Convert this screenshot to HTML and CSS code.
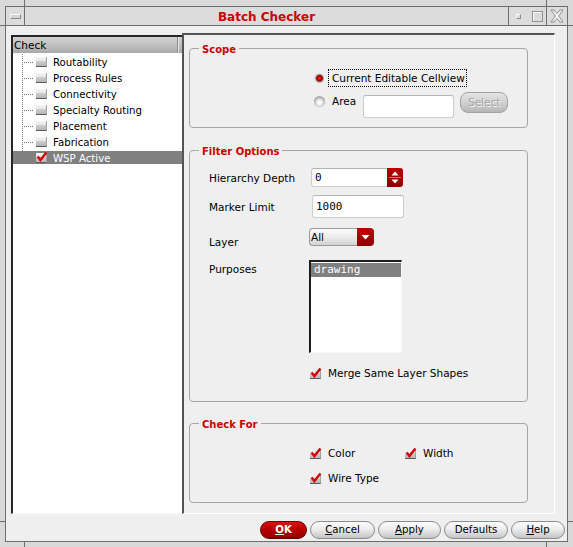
FILE: index.html
```html
<!DOCTYPE html>
<html>
<head>
<meta charset="utf-8">
<title>Batch Checker</title>
<link rel="stylesheet" href="styles.css">
</head>
<body>
<div class="screen">
  <span class="tick tick-v tick-top tick-l"></span>
  <span class="tick tick-v tick-top tick-r"></span>
  <span class="tick tick-v tick-bot tick-l"></span>
  <span class="tick tick-v tick-bot tick-r"></span>
  <span class="tick tick-h tick-upper tick-left"></span>
  <span class="tick tick-h tick-upper tick-right"></span>
  <span class="tick tick-h tick-lower tick-left"></span>
  <span class="tick tick-h tick-lower tick-right"></span>

  <div class="window">
    <div class="titlebar">
      <div class="tb-menu"><span class="menu-btn"></span></div>
      <div class="tb-title">Batch Checker</div>
      <div class="tb-btns"><span class="icon-min"></span><span class="icon-max"></span></div>
      <div class="tb-close">
        <svg width="14" height="14" viewBox="0 0 14 14"><polygon points="1,1 4,1 7,4.6 10,1 13,1 8.6,7 13,13 10,13 7,9.4 4,13 1,13 5.4,7" fill="#f6f6f6" stroke="#8c8c8c" stroke-width="1"/></svg>
      </div>
    </div>

    <div class="client">
      <div class="panes">
        <div class="treepane">
          <div class="tree-head">Check</div>
          <ul class="tree">
            <li class="node"><span class="branch"></span><span class="cb"></span><span class="node-label">Routability</span></li>
            <li class="node"><span class="branch"></span><span class="cb"></span><span class="node-label">Process Rules</span></li>
            <li class="node"><span class="branch"></span><span class="cb"></span><span class="node-label">Connectivity</span></li>
            <li class="node"><span class="branch"></span><span class="cb"></span><span class="node-label">Specialty Routing</span></li>
            <li class="node"><span class="branch"></span><span class="cb"></span><span class="node-label">Placement</span></li>
            <li class="node"><span class="branch"></span><span class="cb"></span><span class="node-label">Fabrication</span></li>
            <li class="node last selected"><span class="branch"></span><span class="cb"><svg class="tick-mark" width="11" height="10" viewBox="0 0 11 10"><path d="M1.6 4.6 L4.4 8 L10.4 0.4" fill="none" stroke="#d40000" stroke-width="2.4"/></svg></span><span class="node-label">WSP Active</span></li>
          </ul>
        </div>

        <div class="formpane">
          <fieldset class="group scope">
            <legend>Scope</legend>
            <div class="scope-body">
              <div class="radio-row">
                <span class="radio on"></span>
                <span class="focus-label">Current Editable Cellview</span>
              </div>
              <div class="radio-row area-row">
                <span class="radio"></span>
                <span class="radio-label">Area</span>
                <span class="field area-field"></span>
                <span class="btn-select">Select</span>
              </div>
            </div>
          </fieldset>

          <fieldset class="group filter">
            <legend>Filter Options</legend>
            <div class="filter-body">
              <div class="frow r-depth">
                <span class="flabel">Hierarchy Depth</span>
                <span class="spinbox">
                  <span class="spin-value">0</span>
                  <span class="spin-btn"><svg width="16" height="19" viewBox="0 0 16 19"><polygon points="4.5,7.5 11.5,7.5 8,3.5" fill="#fff"/><line x1="2" y1="9.5" x2="14" y2="9.5" stroke="#d87070" stroke-width="1"/><polygon points="4.5,11.5 11.5,11.5 8,15.5" fill="#fff"/></svg></span>
                </span>
              </div>
              <div class="frow r-marker">
                <span class="flabel">Marker Limit</span>
                <span class="field marker-field">1000</span>
              </div>
              <div class="frow r-layer">
                <span class="flabel">Layer</span>
                <span class="combo">
                  <span class="combo-value">All</span>
                  <span class="combo-btn"><svg width="17" height="18" viewBox="0 0 17 18"><polygon points="4.5,7 12.5,7 8.5,11.5" fill="#fff"/></svg></span>
                </span>
              </div>
              <div class="frow r-purposes">
                <span class="flabel">Purposes</span>
                <div class="listbox">
                  <div class="list-item selected">drawing</div>
                </div>
              </div>
              <div class="frow r-merge">
                <span class="check-item">
                  <span class="cb"><svg class="tick-mark" width="11" height="10" viewBox="0 0 11 10"><path d="M1.6 4.6 L4.4 8 L10.4 0.4" fill="none" stroke="#d40000" stroke-width="2.4"/></svg></span>
                  <span class="check-label">Merge Same Layer Shapes</span>
                </span>
              </div>
            </div>
          </fieldset>

          <fieldset class="group checkfor">
            <legend>Check For</legend>
            <div class="checkfor-body">
              <div class="crow">
                <span class="check-item col1">
                  <span class="cb"><svg class="tick-mark" width="11" height="10" viewBox="0 0 11 10"><path d="M1.6 4.6 L4.4 8 L10.4 0.4" fill="none" stroke="#d40000" stroke-width="2.4"/></svg></span>
                  <span class="check-label">Color</span>
                </span>
                <span class="check-item">
                  <span class="cb"><svg class="tick-mark" width="11" height="10" viewBox="0 0 11 10"><path d="M1.6 4.6 L4.4 8 L10.4 0.4" fill="none" stroke="#d40000" stroke-width="2.4"/></svg></span>
                  <span class="check-label">Width</span>
                </span>
              </div>
              <div class="crow second">
                <span class="check-item col1">
                  <span class="cb"><svg class="tick-mark" width="11" height="10" viewBox="0 0 11 10"><path d="M1.6 4.6 L4.4 8 L10.4 0.4" fill="none" stroke="#d40000" stroke-width="2.4"/></svg></span>
                  <span class="check-label">Wire Type</span>
                </span>
              </div>
            </div>
          </fieldset>
        </div>
      </div>

      <div class="buttons">
        <span class="btn btn-ok"><u>O</u>K</span>
        <span class="btn btn-cancel"><u>C</u>ancel</span>
        <span class="btn btn-apply"><u>A</u>pply</span>
        <span class="btn btn-defaults">Defaults</span>
        <span class="btn btn-help"><u>H</u>elp</span>
      </div>
    </div>
  </div>
</div>
</body>
</html>
```

FILE: styles.css
```css
* { box-sizing: border-box; }
html, body { margin: 0; padding: 0; }
body {
  width: 573px;
  height: 547px;
  overflow: hidden;
  background: #d9d9d9;
  font-family: "DejaVu Sans", sans-serif;
  font-size: 10.5px;
  color: #000;
}

.screen {
  position: relative;
  width: 573px;
  height: 547px;
  padding: 6px 0 0 5px;
}

/* frame corner ticks */
.tick { position: absolute; background: #6e6e6e; }
.tick-v { width: 1px; }
.tick-h { height: 1px; width: 5px; }
.tick-top { top: 0; height: 6px; }
.tick-bot { top: 542px; height: 5px; }
.tick-l { left: 24px; }
.tick-r { left: 546px; }
.tick-upper { top: 25px; }
.tick-lower { top: 521px; }
.tick-left { left: 0; }
.tick-right { left: 568px; }

.window {
  width: 563px;
  height: 536px;
  border: 1px solid #6e6e6e;
  background: #efefef;
  display: flex;
  flex-direction: column;
}

/* title bar */
.titlebar {
  flex: none;
  height: 19px;
  display: flex;
  background: #dcdcdc;
  border-bottom: 1px solid #6e6e6e;
}
.tb-menu {
  width: 19px;
  border-right: 1px solid #6e6e6e;
  display: flex;
  align-items: center;
  justify-content: center;
  padding-top: 1px;
}
.menu-btn {
  width: 11px;
  height: 5px;
  background: #d4d4d4;
  border: 1px solid #8a8a8a;
  border-top-color: #f6f6f6;
  border-left-color: #f6f6f6;
}
.tb-title {
  flex: 1;
  text-align: center;
  font-weight: bold;
  font-size: 12px;
  line-height: 18px;
  padding-top: 1px;
  color: #cc0000;
}
.tb-btns {
  width: 38px;
  border-left: 1px solid #6e6e6e;
  display: flex;
  align-items: center;
  padding-left: 7px;
}
.icon-min {
  width: 5px;
  height: 5px;
  margin-top: 1px;
  border: 1px solid #8a8a8a;
  border-top-color: #f8f8f8;
  border-left-color: #f8f8f8;
  background: #d8d8d8;
}
.icon-max {
  width: 11px;
  height: 11px;
  margin-left: 11px;
  border: 1px solid #909090;
  box-shadow: inset 1px 1px 0 #fafafa;
}
.tb-close {
  width: 21px;
  border-left: 1px solid #6e6e6e;
  display: flex;
  align-items: center;
  padding-left: 3px;
}

/* client area */
.client {
  flex: 1;
  display: flex;
  flex-direction: column;
  padding: 7px 0 0 5px;
}
.panes {
  display: flex;
  height: 481px;
  flex: none;
}

/* tree */
.treepane {
  width: 171px;
  height: 479px;
  margin-top: 2px;
  background: #fff;
  border-left: 2px solid #262626;
  border-top: 2px solid #262626;
  border-bottom: 1px solid #f8f8f8;
}
.tree-head {
  height: 16px;
  line-height: 16px;
  padding-left: 1px;
  font-size: 10.5px;
  background:
    linear-gradient(to right, transparent 164px, #8e8e8e 164px, #8e8e8e 165px, #e6e6e6 165px, #e6e6e6 166px, transparent 166px),
    linear-gradient(#d2d2d2, #bcbcbc 60%, #a8a8a8);
}
.tree {
  list-style: none;
  margin: 1px 0 0 0;
  padding: 0;
}
.node {
  height: 16px;
  display: flex;
  align-items: center;
  padding-left: 9px;
  font-size: 10.2px;
}
.node.selected {
  background: linear-gradient(transparent 1px, #808080 1px, #808080 14px, transparent 14px);
  color: #fff;
}
.branch {
  width: 12px;
  align-self: stretch;
  background-image:
    repeating-linear-gradient(to bottom, #7c7c7c 0 1px, transparent 1px 2px),
    repeating-linear-gradient(to right, #7c7c7c 0 1px, transparent 1px 2px);
  background-size: 1px 100%, 100% 1px;
  background-position: 0 0, 0 8px;
  background-repeat: no-repeat;
}
.node.last .branch { background-size: 1px 8px, 100% 1px; }
.node .cb { margin-left: 2px; }
.node-label { margin-left: 6px; }

/* checkbox */
.cb {
  position: relative;
  flex: none;
  display: inline-block;
  width: 11px;
  height: 10px;
  background: linear-gradient(#f6f6f6 0%, #e6e6e6 40%, #c8c8c8 55%, #b6b6b6 100%);
  border-bottom: 1px solid #5a5a5a;
  border-right: 1px solid #a0a0a0;
}
.tick-mark { position: absolute; left: 0; top: -1px; overflow: visible; }

/* form pane */
.formpane {
  width: 373px;
  height: 481px;
  border-top: 2px solid #545454;
  border-left: 2px solid #545454;
  border-right: 1px solid #ffffff;
  border-bottom: 1px solid #ffffff;
  padding-left: 5px;
}
.group {
  width: 339px;
  margin: 0;
  padding: 0;
  min-width: 0;
  border: 1px solid #a6a6a6;
  border-radius: 4px;
}
.group legend {
  margin-left: 9px;
  padding: 4px 3px 0 3px;
  font-weight: bold;
  font-size: 10px;
  line-height: 12px;
  color: #cc0000;
}
.scope { margin-top: 5px; }
.filter { margin-top: 14px; }
.checkfor { margin-top: 13px; }

/* scope */
.scope-body { padding: 13px 0 9px 124px; }
.radio-row { display: flex; align-items: center; height: 18px; }
.radio {
  flex: none;
  width: 11px;
  height: 11px;
  border-radius: 50%;
  background: radial-gradient(circle at 50% 60%, #ffffff 0, #f4f4f4 2px, #d6d6d6 3.8px, #a8a8a8 5.5px);
}
.radio.on {
  background: radial-gradient(circle at 50% 48%, #ff3030 0, #d40000 1.6px, #8a0000 3px, #9c9c9c 3.6px, #cfcfcf 4.6px, #eeeeee 5.5px);
}
.focus-label {
  margin-left: 3px;
  border: 1px dotted #000;
  padding: 0 1px 0 3px;
  line-height: 16px;
}
.area-row { margin-top: 5px; height: 26px; align-items: flex-start; }
.area-row .radio { margin-top: 4px; }
.radio-label { margin-left: 7px; margin-top: 3px; line-height: 13px; }
.field {
  display: block;
  background: #fff;
  border: 1px solid #cdcdcd;
  border-top-color: #b4b4b4;
  border-radius: 3px;
}
.area-field { width: 91px; height: 23px; margin-left: 7px; margin-top: 3px; }
.btn-select {
  width: 48px;
  height: 21px;
  margin-left: 6px;
  border: 1px solid #a2a2a2;
  border-radius: 8px;
  background: linear-gradient(#e4e4e4, #cfcfcf 55%, #b6b6b6);
  color: #a4a4a4;
  text-shadow: 1px 1px 0 #f4f4f4;
  text-align: center;
  line-height: 19px;
}

/* filter options */
.filter-body { padding: 10px 0 21px 19px; }
.frow { display: flex; align-items: center; }
.flabel { width: 100px; flex: none; line-height: 13px; }
.r-depth { height: 19px; }
.r-depth .flabel, .r-marker .flabel { padding-top: 1px; }
.r-marker { height: 23px; margin-top: 8px; }
.r-layer { height: 18px; margin-top: 10px; align-items: flex-start; }
.r-layer .flabel { margin-top: 8px; }
.r-purposes { height: 93px; margin-top: 14px; align-items: flex-start; }
.r-purposes .flabel { margin-top: 3px; }
.r-merge { height: 13px; margin-top: 14px; padding-left: 101px; }

.spinbox { display: flex; width: 92px; height: 19px; margin-left: 2px; }
.spin-value {
  flex: 1;
  background: #fff;
  border: 1px solid #cdcdcd;
  border-top-color: #b4b4b4;
  border-right: none;
  border-radius: 3px 0 0 3px;
  padding-left: 3px;
  font-family: "DejaVu Sans Mono", monospace;
  font-size: 11px;
  line-height: 17px;
}
.spin-btn {
  width: 16px;
  height: 19px;
  background: linear-gradient(#b80000, #a00000 50%, #8c0000);
  border-radius: 0 3px 3px 0;
}
.spin-btn svg, .combo-btn svg { display: block; }

.marker-field {
  width: 92px;
  height: 23px;
  margin-left: 3px;
  padding-left: 3px;
  font-family: "DejaVu Sans Mono", monospace;
  font-size: 11px;
  line-height: 21px;
}

.combo { display: flex; width: 65px; height: 18px; }
.combo-value {
  flex: 1;
  border: 1px solid #9a9a9a;
  border-right: none;
  border-radius: 4px 0 0 4px;
  background: linear-gradient(#fbfbfb, #ececec 50%, #d2d2d2);
  padding-left: 1px;
  line-height: 16px;
}
.combo-btn {
  width: 17px;
  height: 18px;
  border-radius: 0 4px 4px 0;
  background: linear-gradient(#c40000, #a60000 50%, #8a0000);
}

.listbox {
  width: 93px;
  height: 93px;
  background: #fff;
  border-top: 2px solid #1c1c1c;
  border-left: 2px solid #1c1c1c;
  border-right: 1px solid #f8f8f8;
  border-bottom: 1px solid #f8f8f8;
}
.list-item {
  margin-top: 1px;
  height: 14px;
  padding-left: 3px;
  font-family: "DejaVu Sans Mono", monospace;
  font-size: 11px;
  line-height: 14px;
}
.list-item.selected { background: #808080; color: #fff; }

.check-item { display: flex; align-items: center; }
.check-label { margin-left: 7px; line-height: 13px; }

/* check for */
.checkfor-body { padding: 16px 0 17px 120px; }
.crow { display: flex; height: 13px; align-items: center; }
.crow.second { margin-top: 12px; }
.col1 { width: 95px; }

/* buttons */
.buttons {
  display: flex;
  justify-content: flex-end;
  gap: 3px;
  margin-top: 7px;
  padding-right: 2px;
  height: 18px;
}
.btn {
  height: 18px;
  border: 1px solid #8c8c8c;
  border-radius: 9px;
  background: linear-gradient(#fdfdfd, #ececec 45%, #d0d0d0 85%, #c4c4c4);
  font-size: 10.2px;
  line-height: 16px;
  text-align: center;
}
.btn u { text-decoration-thickness: 1px; text-underline-offset: 1px; }
.btn-ok {
  width: 47px;
  background: linear-gradient(#dc1010, #b80000 45%, #9c0000 85%, #8a0000);
  border-color: #6a0000;
  color: #fff;
  font-weight: bold;
}
.btn-cancel { width: 65px; }
.btn-apply { width: 63px; }
.btn-defaults { width: 64px; }
.btn-help { width: 54px; }
```
